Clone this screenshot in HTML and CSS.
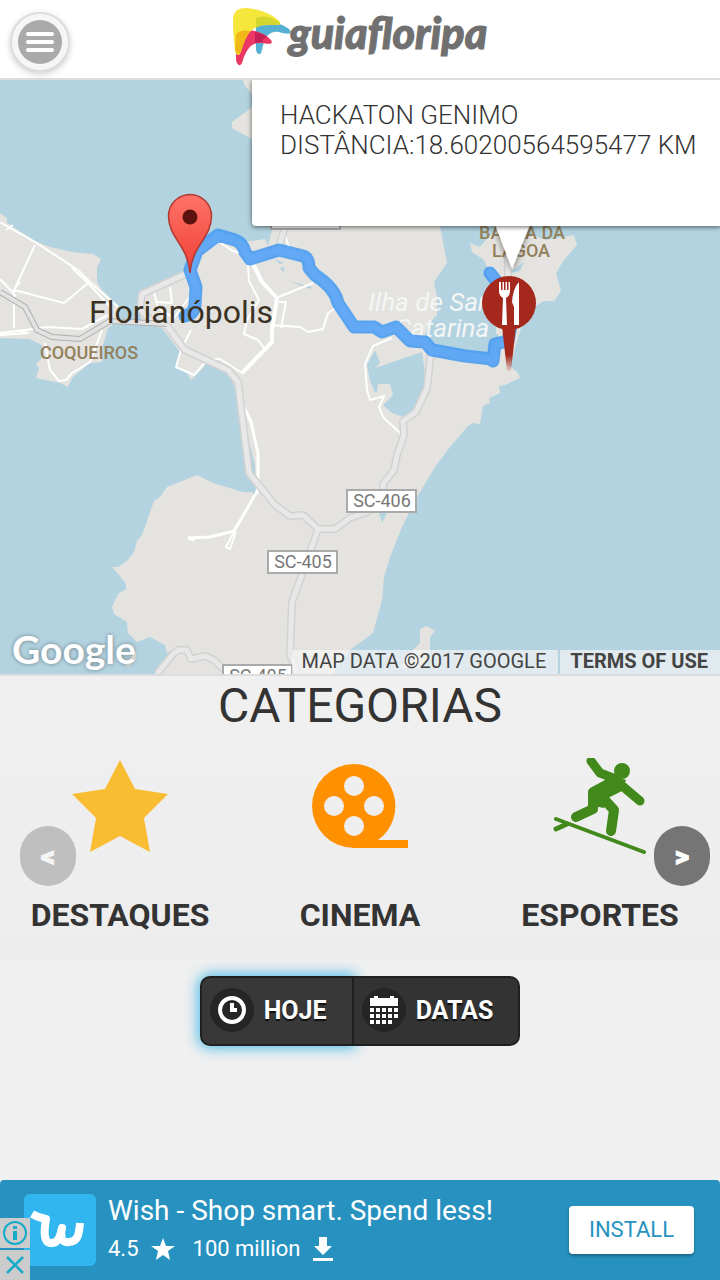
FILE: index.html
```html
<!DOCTYPE html>
<html lang="pt-BR">
<head>
<meta charset="utf-8">
<meta name="viewport" content="width=device-width, initial-scale=1">
<title>Guia Floripa</title>
<link rel="stylesheet" href="styles.css">
</head>
<body>
<header class="topbar">
  <button class="menu" type="button" aria-label="Menu">
    <span class="menu-disc"><span class="menu-bar"></span><span class="menu-bar"></span><span class="menu-bar"></span></span>
  </button>
  <a class="brand" href="#" aria-label="guiafloripa">
    <svg class="brand-mark" viewBox="0 0 60 60" aria-hidden="true">
      <path d="M23 14C31 11 50 15 57 22C60 27 53 26 46 24C37 23 32 27 29 42C28 48 24 47 23 42Z" fill="#56b0d4"/>
      <path d="M3 28C8 19 28 21 38 32C41 37 35 36 28 35C18 34 13 42 9 55C7 59 4 57 3 52Z" fill="#ec3765"/>
      <path d="M0 12C0 4 4 0 13 0C28 1 42 8 47 14C49 18 43 17 35 17C20 17 14 24 8 43C7 49 3 48 2 42C1 33 0 24 0 12Z" fill="#f6e73c"/>
      <path d="M23 10C31 7 40 9 47 15C48 17 40 17 35 17Q28 16 23 20Z" fill="#d2d62f"/>
      <path d="M3 26Q8 21 17 23Q12 30 8 44Q4 48 2 42Z" fill="#f2b719"/>
      <path d="M22 24Q29 25 34 29Q30 30 29 34Q26 34 22 35Z" fill="#c41f56"/>
    </svg>
    <span class="brand-name">guiafloripa</span>
  </a>
</header>

<main>
  <section class="map" aria-label="Mapa">
    <svg class="map-canvas" viewBox="0 80 720 594" preserveAspectRatio="xMidYMid slice">
      <defs>
        <linearGradient id="pin" x1="0" y1="0" x2="0" y2="1"><stop offset="0" stop-color="#ff7268"/><stop offset="1" stop-color="#ee4035"/></linearGradient>
        <linearGradient id="needle" x1="0" y1="0" x2="0" y2="1"><stop offset=".65" stop-color="#a5281d"/><stop offset="1" stop-color="#a5281d" stop-opacity=".1"/></linearGradient>
        <filter id="soft" x="-40%" y="-40%" width="180%" height="180%"><feDropShadow dx="0" dy="2" stdDeviation="3" flood-opacity=".5"/></filter>
      </defs>
      <g class="land">
        <path d="M0 213L7 218V223L35 241L50 247L72 252L93 254L101 259L97 268V282L102 290L118 305V321L108 328L103 345L102 362L90 363L72 378L68 387L60 383L36 378L39 368L36 364L43 357L42 345L29 339L0 338Z"/>
        <path d="M243 80H255V97L245 86ZM232 122L255 105V141L232 128Z"/>
        <path d="M252 241L265 239L268 246L273 226H440L447 263L434 282L437 297V315L430 322L425 335L431 351L468 359L494 360L502 340L496 333L496 328L507 324L504 284L490 275L484 260L472 252L470 243L480 247L490 235L510 226L546 240L574 235L577 245L564 260L556 273L561 291L554 301H544L534 307L521 328L516 345L510 366L518 373L520 378L505 385L499 386L500 393L489 398L490 403L483 406L480 424L473 423L468 426L450 447L435 467L417 497L402 527L390 557L384 577L382 600L373 633L350 650L333 674H155L172 650L167 653L165 645L150 637L137 642L128 633L127 622L114 614L112 607L118 594L126 589V584L120 576L112 567H118L128 560L134 552L137 541L142 535L154 501L160 497L167 487L197 475L213 483L243 492H252L255 488L249 481L246 450L240 407L235 390L230 372L208 362L203 368L191 380L187 373L176 367L180 352L162 328L142 321L138 305L141 294L190 273L196 248L215 235L235 242Z"/>
        <path d="M420 629L427 626L435 631L430 637V650L424 668H400L413 650L420 643ZM125 664L137 650L135 660L128 667Z"/>
      </g>
      <g class="water">
        <path d="M375 350L380 363L375 368L422 352L427 388L417 410L403 417L392 413L383 405L393 395L390 384H378L377 392L375 393L370 381L367 365ZM275 259L284 263L280 264ZM280 268L284 267V273ZM289 281L312 287L310 289ZM246 430L255 465L256 499L252 492L247 479ZM379 513L388 511L382 523ZM507 274L524 262L520 271Z"/>
      </g>
      <g class="streets">
        <path d="M0 222L35 242L78 270L90 282L118 307M6 230L13 225M35 245L14 290L64 303L88 283L72 268M88 283L112 309M14 290V328M20 282L15 288M0 279L16 296M0 333L25 330L48 327L82 329L108 315M0 335L28 333L18 330M45 343L50 370L59 381L66 380L72 373L90 362L102 330M154 292L158 308L174 318M170 287L172 303L155 302M174 318L195 290M191 330L181 350L176 367L194 375L207 360L220 359L242 373L264 350M205 247L218 241L233 251L240 253M248 265L249 281L259 300L247 320L244 334L258 340L264 348"/>
        <path class="thin" d="M276 298L313 283M279 302H286L281 328M270 325L300 327L308 332L323 329L328 313L336 308M392 338L373 346L365 364L367 390L370 400L384 396L379 407L383 417L400 433M285 235L289 248"/>
        <path class="medium" d="M244 407L251 422L258 453V490L234 531L210 537L190 538"/>
        <path d="M234 532L226 547L230 549L236 532"/>
        <path class="wide" d="M252 262L262 282L277 298L272 330V342L242 373M188 537L194 540"/>
      </g>
      <g class="highway">
        <path id="main-road" d="M190 272L142 294L140 309L151 321L167 326L185 350L228 370L238 382L241 407L249 473L275 505L290 516L303 515L318 529H335L350 518L367 512L383 504L383 484L394 470L397 455L404 435L403 421L416 412L427 388L431 351M318 529L309 555L292 602L290 655L298 674M285 226L279 247M508 226V300M157 674L173 654L178 650H187L191 659L205 656L214 660L222 668L235 672"/>
        <use href="#main-road" class="highway-fill"/>
      </g>
      <path class="bridge-edge" d="M0 292L25 307L37 330L52 337L80 339L110 321L167 324"/>
      <path class="bridge-fill" d="M0 292L25 307L37 330L52 337L80 339L110 321L167 324"/>
      <g class="shield">
        <rect x="271" y="209" width="69" height="20"/>
        <rect x="347" y="490" width="69" height="22"/><text x="382" y="507">SC-406</text>
        <rect x="268" y="551" width="69" height="22"/><text x="303" y="568">SC-405</text>
        <rect x="223" y="665" width="69" height="22"/><text x="258" y="682">SC-405</text>
      </g>
      <text class="district" x="89" y="359">COQUEIROS</text>
      <text class="district" x="522" y="239">BARRA DA</text>
      <text class="district" x="521" y="257">LAGOA</text>
      <text class="island" x="441" y="311">Ilha de Santa</text>
      <text class="island" x="442" y="337">Catarina</text>
      <path class="route" d="M185 316Q194 314 195 305L196 287L190 270L197 251L218 235L235 240Q243 243 245 252L250 259L279 250L303 256Q309 258 309 268L315 275Q335 288 338 303L354 327H374L382 332L396 327L410 341L425 342L432 350L465 356L492 359L493 361L495 344L508 341L511 325V300L490 273"/>
      <path class="route-core" d="M185 316Q194 314 195 305L196 287L190 270L197 251L218 235L235 240Q243 243 245 252L250 259L279 250L303 256Q309 258 309 268L315 275Q335 288 338 303L354 327H374L382 332L396 327L410 341L425 342L432 350L465 356L492 359L493 361L495 344L508 341L511 325V300L490 273"/>
      <text class="city" x="181" y="323">Florianópolis</text>
      <path d="M190 273C188 245 168.500 238 168.500 216A21.500 21.500 0 0 1 211.500 216C211.500 238 192 245 190 273Z" fill="url(#pin)" stroke="#b23a32" stroke-width="1.500"/>
      <circle cx="190" cy="217" r="7.500" fill="#5c120e"/>
      <path d="M494 222L512 269L531 222Z" fill="#fff" filter="url(#soft)"/>
      <path d="M502 326L507 371H511L516 326Z" fill="url(#needle)"/>
      <circle cx="509" cy="303" r="27" fill="#a5281d"/>
      <path fill="#fff" d="M499 282V291Q499 296 503 298L502 325H507L506 298Q510 296 510 291V282H508.500V290H507V282H505.500V290H504V282H502.500V290H501V282ZM519 282Q513 288 512 302L514 307V325H519Z"/>
    </svg>
    <div class="popup">HACKATON GENIMO<br>DISTÂNCIA:18.60200564595477 KM</div>
    <span class="google">Google</span>
    <div class="credits"><span class="credit">MAP DATA ©2017 GOOGLE</span><a class="credit terms" href="#">TERMS OF USE</a></div>
  </section>

  <section class="categories">
    <h1 class="title">CATEGORIAS</h1>
    <div class="carousel">
      <a class="category" href="#">
        <svg class="category-icon" viewBox="0 0 96 96" aria-hidden="true"><path d="M48 2L63 31L96 36L72 60L78 94L48 78L18 94L24 60L0 36L33 31Z" fill="#f9bd33"/></svg>
        <span>DESTAQUES</span>
      </a>
      <a class="category" href="#">
        <svg class="category-icon" viewBox="0 0 96 96" aria-hidden="true"><path fill="#ff9100" fill-rule="evenodd" d="M42 6A42 42 0 0 1 66 82H96V90H42A42 42 0 0 1 42 6ZM42 18A10 10 0 1 0 42 38A10 10 0 1 0 42 18ZM22 38A10 10 0 1 0 22 58A10 10 0 1 0 22 38ZM62 38A10 10 0 1 0 62 58A10 10 0 1 0 62 38ZM42 58A10 10 0 1 0 42 78A10 10 0 1 0 42 58Z"/></svg>
        <span>CINEMA</span>
      </a>
      <a class="category" href="#">
        <svg class="category-icon" viewBox="0 0 96 96" aria-hidden="true">
          <g fill="none" stroke="#42891b" stroke-linecap="round" stroke-linejoin="round">
            <path d="M39 3L48 15L64 21M68 26L88 43" stroke-width="9"/>
            <path d="M41 37V51L24 59M50 39L62 52L59 73" stroke-width="10"/>
            <path d="M4 61L92 94" stroke-width="4"/>
            <path d="M4 71L15 66" stroke-width="5"/>
          </g>
          <path d="M53 16L74 22L70 33L56 40L52 50L36 47V34Q36 31 40 29L53 22Z" fill="#42891b"/>
          <circle cx="70" cy="13" r="8" fill="#42891b"/>
        </svg>
        <span>ESPORTES</span>
      </a>
      <button class="arrow arrow-prev" type="button" aria-label="Anterior">&lt;</button>
      <button class="arrow arrow-next" type="button" aria-label="Próximo">&gt;</button>
    </div>
  </section>

  <div class="filters">
    <button class="filter filter-active" type="button">
      <svg class="filter-icon" viewBox="0 0 44 44" aria-hidden="true"><circle cx="22" cy="22" r="22" fill="#252525"/><circle cx="22" cy="22" r="12" fill="none" stroke="#fff" stroke-width="4"/><path d="M22 15V22H27" fill="none" stroke="#fff" stroke-width="4"/></svg>
      HOJE
    </button>
    <button class="filter" type="button">
      <svg class="filter-icon" viewBox="0 0 44 44" aria-hidden="true"><circle cx="22" cy="22" r="22" fill="#252525"/><path fill="#fff" d="M8 10H12V8H16V10H28V8H32V10H36V18H8ZM8 20h4v4h-4zM14 20h4v4h-4zM20 20h4v4h-4zM26 20h4v4h-4zM32 20h4v4h-4zM8 26h4v4h-4zM14 26h4v4h-4zM20 26h4v4h-4zM26 26h4v4h-4zM32 26h4v4h-4zM8 32h4v4h-4zM14 32h4v4h-4zM20 32h4v4h-4zM26 32h4v4h-4z"/></svg>
      DATAS
    </button>
  </div>
</main>

<aside class="ad">
  <svg class="ad-logo" viewBox="0 0 72 72" aria-hidden="true"><rect width="72" height="72" rx="6" fill="#31b6f0"/><path d="M8 20Q15 24 22 25Q18 48 26 49C34 50 36 43 38 34C36 44 38 49 45 48C53 48 55 42 56 29" fill="none" stroke="#fff" stroke-width="8" stroke-linejoin="round"/></svg>
  <div class="ad-copy">
    <span class="ad-title">Wish - Shop smart. Spend less!</span>
    <span class="ad-meta">4.5
      <svg class="ad-star" viewBox="0 0 24 24" aria-hidden="true"><path fill="#fff" d="M12 1L15 9H24L17 14L19 23L12 18L5 23L7 14L0 9H9Z"/></svg>
      100 million
      <svg class="ad-download" viewBox="0 0 22 26" aria-hidden="true"><path fill="#fff" d="M7 1H15V10H20L11 19L2 10H7ZM1 22H21V25H1Z"/></svg>
    </span>
  </div>
  <a class="install" href="#">INSTALL</a>
  <div class="ad-controls">
    <button class="ad-control" type="button" aria-label="Informações"><svg viewBox="0 0 30 30"><circle cx="15" cy="15" r="11" fill="none" stroke="#16abc9" stroke-width="2"/><path d="M13 8H17V11H13ZM13 13H17V22H13Z" fill="#16abc9"/></svg></button>
    <button class="ad-control" type="button" aria-label="Fechar"><svg viewBox="0 0 30 30"><path d="M7 7L23 23M23 7L7 23" stroke="#16abc9" stroke-width="2.500"/></svg></button>
  </div>
</aside>
</body>
</html>
```
FILE: styles.css
```css
* { box-sizing: border-box; }
body {
  margin: 0;
  min-height: 100vh;
  display: flex;
  flex-direction: column;
  background: #f0f0f0;
  color: #333;
  font-family: Roboto, "Liberation Sans", sans-serif;
}
button { font: inherit; padding: 0; border: 0; cursor: pointer; }
a { color: inherit; text-decoration: none; }
main { display: flex; flex-direction: column; }

.topbar {
  display: grid;
  grid-template-columns: 80px 1fr 80px;
  align-items: center;
  height: 80px;
  background: #fff;
  border-bottom: 2px solid #ddd;
}
.menu {
  width: 60px;
  height: 60px;
  margin: 6px 0 0 10px;
  padding: 6px;
  border: 2px solid #ddd;
  border-radius: 50%;
  background: #f6f6f6;
  box-shadow: 0 2px 6px rgba(0, 0, 0, .2);
}
.menu-disc {
  display: flex;
  flex-direction: column;
  align-items: center;
  justify-content: center;
  gap: 4px;
  height: 44px;
  border-radius: 50%;
  background: #aaa;
}
.menu-bar { width: 28px; height: 4px; border-radius: 2px; background: #fff; }
.brand { display: flex; justify-content: center; align-items: flex-start; height: 78px; padding-top: 8px; }
.brand-mark { width: 60px; height: 60px; overflow: visible; }
.brand-name {
  margin-left: -4px;
  font: italic 900 43px/50px Lato, sans-serif;
  color: #707070;
  -webkit-text-stroke: 1px #707070;
}

.map {
  position: relative;
  overflow: hidden;
  border-bottom: 2px solid #ddd;
  background: #b3d3e0;
}
.map-canvas { display: block; width: 100%; aspect-ratio: 720 / 594; }
.land { fill: #e4e3df; }
.water { fill: #b3d3e0; }
.streets { fill: none; stroke: #fff; stroke-width: 2; stroke-linejoin: round; }
.thin { stroke-width: 2; }
.medium { stroke-width: 3; }
.wide { stroke-width: 4; }
.highway { fill: none; stroke: #d2d2d2; stroke-width: 8; stroke-linejoin: round; }
.highway-fill { stroke: #e8e8e8; stroke-width: 5; }
.bridge-edge { fill: none; stroke: #afafaf; stroke-width: 6; }
.bridge-fill { fill: none; stroke: #e2e2e2; stroke-width: 4; }
.shield { font-size: 18px; text-anchor: middle; }
.shield rect { fill: #fff; stroke: #aaa; stroke-width: 2; }
.shield text { fill: #777; }
.district { fill: #94815b; font-size: 18px; font-weight: 500; text-anchor: middle; }
.island { fill: #f5f5f5; font-size: 26px; font-style: italic; text-anchor: middle; }
.city { fill: #3b3223; font-size: 32px; text-anchor: middle; }
.route, .route-core { fill: none; stroke-linecap: round; stroke-linejoin: round; }
.route { stroke: #4299f2; stroke-width: 13; stroke-opacity: .85; }
.route-core { stroke: #68acf7; stroke-width: 8; stroke-opacity: .6; }
.popup {
  position: absolute;
  top: 0;
  left: 252px;
  width: max-content;
  min-width: calc(100% - 252px);
  padding: 20px 24px 66px 28px;
  border-radius: 0 0 0 4px;
  background: #fff;
  box-shadow: 0 1px 5px rgba(0, 0, 0, .6);
  font-size: 26px;
  font-weight: 300;
  line-height: 30px;
}
.google {
  position: absolute;
  left: 12px;
  bottom: 0;
  color: #fff;
  font: 700 39px/50px Lato, sans-serif;
  text-shadow: 0 0 4px rgba(0, 0, 0, .4);
}
.credits {
  position: absolute;
  right: 0;
  bottom: 0;
  display: flex;
  font-size: 20px;
  line-height: 22px;
  color: #444;
}
.credit { padding: 0 12px 2px 10px; background: rgba(245, 245, 245, .7); }
.terms { margin-left: 2px; font-weight: 700; }

.categories { background: linear-gradient(#f0f0f0, #ededed); }
.title { margin: 0; font-size: 48px; line-height: 60px; font-weight: 400; text-align: center; }
.carousel { position: relative; display: grid; grid-template-columns: repeat(3, 1fr); padding: 22px 0 24px; }
.category {
  display: flex;
  flex-direction: column;
  align-items: center;
  gap: 40px;
  font-size: 32px;
  line-height: 42px;
  font-weight: 700;
}
.category-icon { width: 96px; height: 96px; }
.arrow {
  position: absolute;
  top: 90px;
  width: 56px;
  height: 60px;
  border-radius: 28px;
  background: #757575;
  color: #fff;
  font-size: 28px;
  font-weight: 900;
  -webkit-text-stroke: 1px currentColor;
}
.arrow-prev { left: 20px; background: #bfbfbf; color: #f5f5f5; }
.arrow-next { right: 10px; }

.filters {
  display: flex;
  align-self: center;
  margin: 16px 0 32px;
}
.filter {
  display: flex;
  align-items: center;
  gap: 10px;
  height: 70px;
  padding: 0 25px 2px 8px;
  border: 2px solid #202020;
  border-left-width: 0;
  border-radius: 0 10px 10px 0;
  background: #333;
  color: #fff;
  font-size: 25px;
  font-weight: 700;
  text-shadow: 0 2px 1px #111;
}
.filter-active {
  border-left-width: 2px;
  border-radius: 10px 0 0 10px;
  background: #383838;
  box-shadow: 0 0 14px 2px #4dbbe8;
}
.filter-icon { width: 44px; height: 44px; }

.ad {
  position: relative;
  display: flex;
  align-items: center;
  gap: 12px;
  height: 100px;
  margin-top: auto;
  padding: 0 26px 0 24px;
  border-radius: 4px 4px 0 0;
  background: #2792bf;
  color: #fff;
}
.ad-logo { width: 72px; height: 72px; }
.ad-copy { flex: 1; display: flex; flex-direction: column; gap: 4px; padding-bottom: 2px; }
.ad-title { font-size: 28px; line-height: 36px; }
.ad-meta { display: flex; align-items: center; gap: 12px; font-size: 22px; line-height: 32px; }
.ad-star { width: 24px; height: 24px; margin-right: 6px; }
.ad-download { width: 22px; height: 26px; }
.install {
  padding: 0 20px;
  border-radius: 4px;
  background: #fff;
  box-shadow: 0 2px 3px rgba(0, 0, 0, .3);
  color: #2792bf;
  font-size: 22px;
  line-height: 48px;
}
.ad-controls { position: absolute; left: 0; bottom: 0; display: grid; gap: 2px; }
.ad-control { display: block; width: 30px; height: 30px; background: #ccc; }
.ad-control svg { display: block; }
```
